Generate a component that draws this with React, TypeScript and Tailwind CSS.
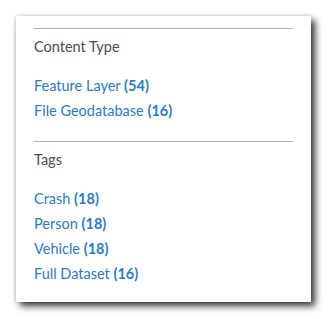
const SECTIONS = [
  {
    title: 'Content Type',
    items: [
      { label: 'Feature Layer', count: 54 },
      { label: 'File Geodatabase', count: 16 },
    ],
  },
  {
    title: 'Tags',
    items: [
      { label: 'Crash', count: 18 },
      { label: 'Person', count: 18 },
      { label: 'Vehicle', count: 18 },
      { label: 'Full Dataset', count: 16 },
    ],
  },
]

export default function App() {
  return (
    <div className="h-[319px] w-[328px] bg-white pl-4 pt-4 font-['Lato','Noto_Sans',sans-serif]">
      <div className="w-[295px] bg-white px-[18px] pb-4 pt-3 shadow-[4px_4px_7px_rgba(0,0,0,0.8),-1px_0_3px_rgba(0,0,0,0.15)]">
        {SECTIONS.map((section, i) => (
          <section key={section.title} className={i > 0 ? 'mt-[18px]' : ''}>
            <div className="border-t border-[#b3b3b3]" />
            <h3 className="pt-2 text-[14.5px] leading-5 text-[#4c4c4c]">{section.title}</h3>
            <ul className="mt-4">
              {section.items.map((item) => (
                <li key={item.label} className="text-[14.5px] leading-[25px] text-[#2d7bc0]">
                  <a href="#">
                    {item.label} <span className="font-bold">({item.count})</span>
                  </a>
                </li>
              ))}
            </ul>
          </section>
        ))}
      </div>
    </div>
  )
}
